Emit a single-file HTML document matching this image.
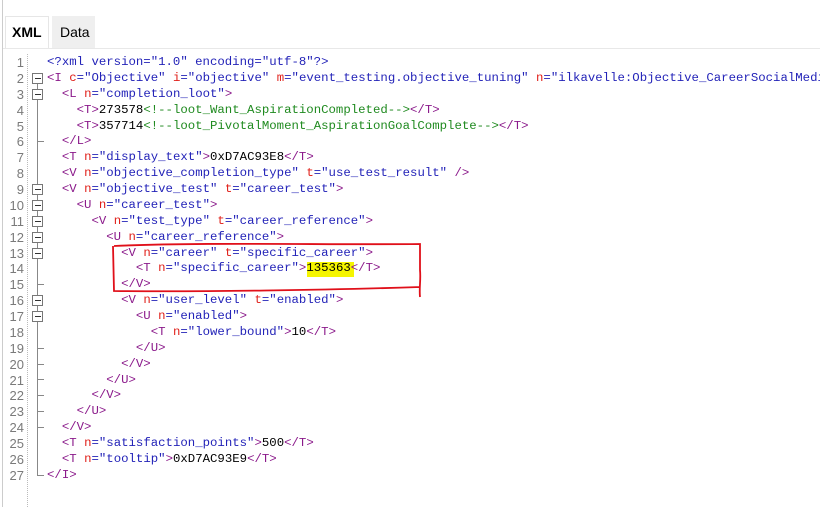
<!DOCTYPE html>
<html><head><meta charset="utf-8"><style>
html,body{margin:0;padding:0;width:820px;height:507px;overflow:hidden;background:#fff;}
body{position:relative;font-family:"Liberation Sans",sans-serif;}
.tab{position:absolute;font-size:14px;color:#000;}
.code{position:absolute;left:47px;top:55px;font-family:"Liberation Mono",monospace;font-size:12.35px;}
.r{height:15.88px;line-height:15.88px;white-space:pre;}
.ln{position:absolute;left:0;width:24px;text-align:right;font-family:"Liberation Sans",sans-serif;font-size:13px;color:#7a7a7a;}
.ln div{height:15.88px;line-height:15.88px;}
.t{color:#8b1a8b}.a{color:#e0201a}.v{color:#2323b8}.c{color:#1f8a1f}.k{color:#000}
.box{position:absolute;left:32px;width:9px;height:9px;border:1px solid #777;background:#fff;}
.box:after{content:"";position:absolute;left:1.5px;top:4px;width:6px;height:1px;background:#333;}
.tick{position:absolute;left:37px;width:7px;height:1px;background:#888;}
</style></head><body>
<div style="position:absolute;left:2px;top:0;width:1px;height:507px;background:#ccc"></div>
<div style="position:absolute;left:5px;top:16px;width:42px;height:32px;background:#fff;border:1px solid #e6e6e6;border-bottom:none"></div>
<div class="tab" style="left:12px;top:24px;font-weight:bold">XML</div>
<div style="position:absolute;left:52px;top:16px;width:43px;height:32px;background:#efefef"></div>
<div class="tab" style="left:60px;top:24px">Data</div>
<div style="position:absolute;left:3px;top:48px;width:817px;height:1px;background:#e8e8e8"></div>
<div style="position:absolute;left:27px;top:54px;width:0;height:453px;border-left:1px dotted #bbb"></div>
<div style="position:absolute;left:37px;top:78px;width:1px;height:398px;background:#888"></div>
<div style="position:absolute;left:307px;top:262px;width:47px;height:15px;background:#f5f500"></div>
<div class="code">
<div class="r"><span class="v">&lt;?xml version="1.0" encoding="utf-8"?&gt;</span></div>
<div class="r"><span class="t">&lt;I </span><span class="a">c</span><span class="v">="Objective" </span><span class="a">i</span><span class="v">="objective" </span><span class="a">m</span><span class="v">="event_testing.objective_tuning" </span><span class="a">n</span><span class="v">="ilkavelle:Objective_CareerSocialMedia"</span></div>
<div class="r">  <span class="t">&lt;L </span><span class="a">n</span><span class="v">="completion_loot"</span><span class="t">&gt;</span></div>
<div class="r">    <span class="t">&lt;T&gt;</span>273578<span class="c">&lt;!--loot_Want_AspirationCompleted--&gt;</span><span class="t">&lt;/T&gt;</span></div>
<div class="r">    <span class="t">&lt;T&gt;</span>357714<span class="c">&lt;!--loot_PivotalMoment_AspirationGoalComplete--&gt;</span><span class="t">&lt;/T&gt;</span></div>
<div class="r">  <span class="t">&lt;/L&gt;</span></div>
<div class="r">  <span class="t">&lt;T </span><span class="a">n</span><span class="v">="display_text"</span><span class="t">&gt;</span>0xD7AC93E8<span class="t">&lt;/T&gt;</span></div>
<div class="r">  <span class="t">&lt;V </span><span class="a">n</span><span class="v">="objective_completion_type" </span><span class="a">t</span><span class="v">="use_test_result" </span><span class="t">/&gt;</span></div>
<div class="r">  <span class="t">&lt;V </span><span class="a">n</span><span class="v">="objective_test" </span><span class="a">t</span><span class="v">="career_test"</span><span class="t">&gt;</span></div>
<div class="r">    <span class="t">&lt;U </span><span class="a">n</span><span class="v">="career_test"</span><span class="t">&gt;</span></div>
<div class="r">      <span class="t">&lt;V </span><span class="a">n</span><span class="v">="test_type" </span><span class="a">t</span><span class="v">="career_reference"</span><span class="t">&gt;</span></div>
<div class="r">        <span class="t">&lt;U </span><span class="a">n</span><span class="v">="career_reference"</span><span class="t">&gt;</span></div>
<div class="r">          <span class="t">&lt;V </span><span class="a">n</span><span class="v">="career" </span><span class="a">t</span><span class="v">="specific_career"</span><span class="t">&gt;</span></div>
<div class="r">            <span class="t">&lt;T </span><span class="a">n</span><span class="v">="specific_career"</span><span class="t">&gt;</span>135363<span class="t">&lt;/T&gt;</span></div>
<div class="r">          <span class="t">&lt;/V&gt;</span></div>
<div class="r">          <span class="t">&lt;V </span><span class="a">n</span><span class="v">="user_level" </span><span class="a">t</span><span class="v">="enabled"</span><span class="t">&gt;</span></div>
<div class="r">            <span class="t">&lt;U </span><span class="a">n</span><span class="v">="enabled"</span><span class="t">&gt;</span></div>
<div class="r">              <span class="t">&lt;T </span><span class="a">n</span><span class="v">="lower_bound"</span><span class="t">&gt;</span>10<span class="t">&lt;/T&gt;</span></div>
<div class="r">            <span class="t">&lt;/U&gt;</span></div>
<div class="r">          <span class="t">&lt;/V&gt;</span></div>
<div class="r">        <span class="t">&lt;/U&gt;</span></div>
<div class="r">      <span class="t">&lt;/V&gt;</span></div>
<div class="r">    <span class="t">&lt;/U&gt;</span></div>
<div class="r">  <span class="t">&lt;/V&gt;</span></div>
<div class="r">  <span class="t">&lt;T </span><span class="a">n</span><span class="v">="satisfaction_points"</span><span class="t">&gt;</span>500<span class="t">&lt;/T&gt;</span></div>
<div class="r">  <span class="t">&lt;T </span><span class="a">n</span><span class="v">="tooltip"</span><span class="t">&gt;</span>0xD7AC93E9<span class="t">&lt;/T&gt;</span></div>
<div class="r"><span class="t">&lt;/I&gt;</span></div>
</div>
<div class="ln" style="top:55px"><div>1</div><div>2</div><div>3</div><div>4</div><div>5</div><div>6</div><div>7</div><div>8</div><div>9</div><div>10</div><div>11</div><div>12</div><div>13</div><div>14</div><div>15</div><div>16</div><div>17</div><div>18</div><div>19</div><div>20</div><div>21</div><div>22</div><div>23</div><div>24</div><div>25</div><div>26</div><div>27</div></div>
<div class="box" style="top:73px"></div>
<div class="box" style="top:89px"></div>
<div class="box" style="top:184px"></div>
<div class="box" style="top:200px"></div>
<div class="box" style="top:216px"></div>
<div class="box" style="top:232px"></div>
<div class="box" style="top:248px"></div>
<div class="box" style="top:295px"></div>
<div class="box" style="top:311px"></div>
<div class="tick" style="top:141px"></div>
<div class="tick" style="top:284px"></div>
<div class="tick" style="top:348px"></div>
<div class="tick" style="top:364px"></div>
<div class="tick" style="top:379px"></div>
<div class="tick" style="top:395px"></div>
<div class="tick" style="top:411px"></div>
<div class="tick" style="top:427px"></div>
<div class="tick" style="top:475px"></div>
<svg style="position:absolute;left:0;top:0" width="820" height="507">
<path d="M114 246 C200 242 330 245 420 244 L420 270 C421 280 419 288 420 297 M420 287 C330 290 200 292 114 291 L113 246" fill="none" stroke="#e0101a" stroke-width="1.8"/>
</svg>
</body></html>
